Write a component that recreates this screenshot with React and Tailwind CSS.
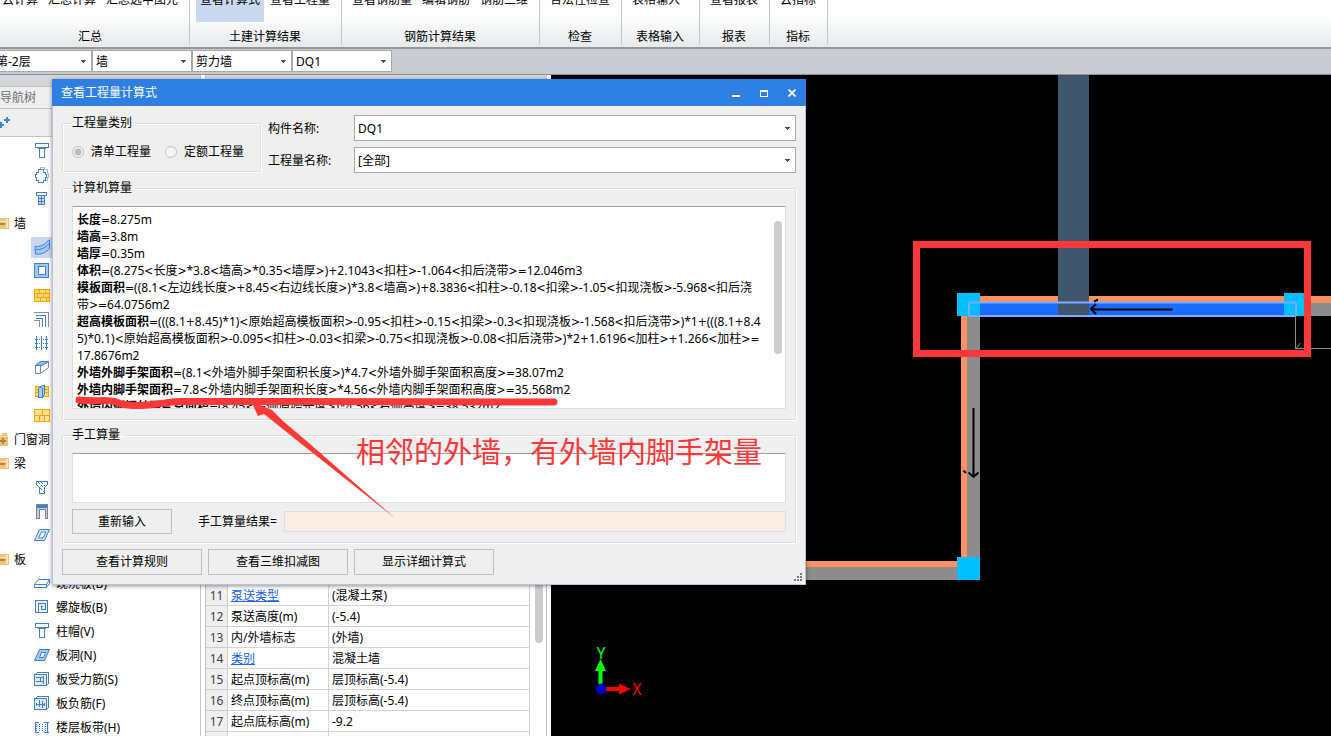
import React from "react";

const B = "#3d7fd0";

function Icon({ children }) {
  return (
    <svg width="16" height="16" viewBox="0 0 16 16" fill="none" stroke={B} shapeRendering="crispEdges" className="shrink-0" aria-hidden="true">
      {children}
    </svg>
  );
}

const ICONS = {
  cap: (
    <Icon>
      <path d="M1.5 .5h13v4h-13zM3.5 4.500l2 2M12.500 4.500l-2 2M5.500 5.500h5v9h-5z" fill="#fff" />
    </Icon>
  ),
  gear: (
    <Icon>
      <path d="M6.500 2.500v-2h4v2h3v4h1v4h-1v3h-2" stroke="#9cc3f0" />
      <path d="M4.500 2.500h5v3h2v2h1v3h-1v3h-2v2h-5v-2h-2v-3h-1v-3h1v-2h2z" fill="#fff" strokeWidth="1.500" />
    </Icon>
  ),
  pile: (
    <Icon>
      <path d="M2.500 1.500h10v3h-10z" fill="#fff" />
      <path d="M4.500 4.500h6v9h-6z" fill="#cfe0f6" />
      <path d="M4 7.500h7M4 10.500h7M7.500 5v9" />
    </Icon>
  ),
  wall: (
    <Icon>
      <path d="M1 7.500C7 8 12 5 14.500 1l1 .5v8C13 13 7 16 1.500 15z" fill="#a0c8f6" shapeRendering="auto" />
      <path d="M1.500 10.500C7 11 12 8.500 15 4.500" shapeRendering="auto" />
    </Icon>
  ),
  frame: (
    <Icon>
      <path d="M.5 .5h14v14h-14z" fill="#a0c8f6" />
      <path d="M4.500 3.500h7v8h-7z" fill="#fff" />
    </Icon>
  ),
  brick: (
    <Icon>
      <path d="M.5 2.500h15v12h-15z" fill="#ffd773" stroke="#f5a800" />
      <path d="M0 6.500h16M0 10.500h16M5.500 3v3M11.500 3v3M3.500 7v3M9.500 7v3M6.500 11v3M12.500 11v3" stroke="#f5a800" />
    </Icon>
  ),
  corner: (
    <Icon>
      <path d="M0 1.500h14.500V16" stroke="#8591a0" />
      <path d="M2 4.500h9.500V16M2 7.500h6.500V16" />
      <path d="M0 9.500h5.500V16" stroke="#8591a0" />
    </Icon>
  ),
  grid: (
    <Icon>
      <path d="M2.500 1v14M7.500 1v14M12.500 1v14" />
      <path d="M1 4.500h14M1 8.500h14M1 12.500h14" strokeDasharray="1 1" />
    </Icon>
  ),
  beamBox: (
    <Icon>
      <path d="M1.500 6.500l5-4h8v6l-8 6h-5z" fill="#fff" stroke="#7d8896" shapeRendering="auto" />
      <path d="M1.500 6.500l5-4h8l-6 4z" fill="#8fbcf2" shapeRendering="auto" />
      <path d="M6.500 7v7" stroke="#7d8896" />
    </Icon>
  ),
  door: (
    <Icon>
      <path d="M1.500 3.500h13v10h-13z" fill="#ffd773" stroke="#f5a800" />
      <path d="M1 6.500h14M1 9.500h14" stroke="#f5a800" />
      <path d="M4.500 5.500l4-3h2v9l-2 3h-4z" fill="#a9cdf5" />
      <path d="M8.500 5v9" />
    </Icon>
  ),
  block: (
    <Icon>
      <path d="M.5 2.500h15v12h-15z" fill="#ffe093" stroke="#f5a800" />
      <path d="M0 8.500h16M8.500 3v5M5.500 9v5M10.500 9v5" stroke="#f5a800" />
    </Icon>
  ),
  funnel: (
    <Icon>
      <path d="M2.500 2.500h11v3l-3 3v6h-5v-6l-3-3z" fill="#fff" />
      <path d="M4 3l6 6M7 3l4 4M6 9l4 4" strokeDasharray="1 1" />
    </Icon>
  ),
  lintel: (
    <Icon>
      <path d="M2.500 1.500h11v14h-2v-9h-6v9h-3z" fill="#c3ccd8" stroke="#7d8896" />
      <path d="M3 3.500h10" strokeWidth="3" />
    </Icon>
  ),
  slope: (
    <Icon>
      <path d="M.5 13.500l5-11h10l-5 11zM4.500 11l3-6h4.500l-3 6z" fill="#cfe2fa" fillRule="evenodd" shapeRendering="auto" />
    </Icon>
  ),
  slab: (
    <Icon>
      <path d="M.5 9.500l4-5h11l-3 5zM.5 9.500v3h12l3-4v-4M12.500 9.500v3" fill="#fff" shapeRendering="auto" />
    </Icon>
  ),
  spiral: (
    <Icon>
      <path d="M1.500 1.500h12v12h-12zM4.500 13V4.500h6.500v6H7.500V7.500h1.500" fill="#eef5fd" />
    </Icon>
  ),
  hole: (
    <Icon>
      <path d="M.5 13.500l5-11h10l-5 11z" fill="#a0c8f6" shapeRendering="auto" />
      <path d="M5.500 10.500l2-5h4l-2 5z" fill="#fff" shapeRendering="auto" />
    </Icon>
  ),
  barS: (
    <Icon>
      <path d="M1.500 3.500l2-2h11v11l-2 2" />
      <path d="M.5 3.500h12v11h-12z" fill="#e0edfb" />
      <path d="M2 6.500h8M2 10.500h8M6.500 6v5M9.500 5v8" />
    </Icon>
  ),
  barF: (
    <Icon>
      <path d="M1.500 3.500l2-2h11v11l-2 2" />
      <path d="M.5 3.500h12v11h-12z" fill="#e0edfb" />
      <path d="M5.500 5v7M8.500 6v7M2 9.500h9M2.500 8v3M10.500 8v3" />
    </Icon>
  ),
  band: (
    <Icon>
      <path d="M1.500 3.500h13v10h-13z" fill="#eaf2fc" stroke="none" />
      <path d="M1 3.500h4M1 13.500h4M10 3.500h5M10 13.500h5" />
      <path d="M2.500 5v8M5.500 5v8M8.500 5v8M11.500 5v8" strokeDasharray="1 1" />
      <path d="M1.500 3v11M13.500 3v11" />
    </Icon>
  ),
};

function Folder({ closed }) {
  return (
    <svg width="9" height="13" viewBox="0 0 9 13" className="shrink-0" aria-hidden="true">
      <path d={closed ? "M0 2h2V0h5v2h1v11H0z" : "M0 1h9v11H0z"} fill="#edc27a" />
      <path d={closed ? "M0 3h8v1H0z" : "M0 4h6v1H0zM6 2h2v9H6z"} fill="#f9e3b8" />
      <path d={closed ? "M0 7h6v2H0zM2 5h2v6H2z" : "M0 6h5v2H0z"} fill="#b98432" />
    </svg>
  );
}

const TREE = [
  { icon: "cap" },
  { icon: "gear" },
  { icon: "pile" },
  { folder: "墙" },
  { icon: "wall", active: true },
  { icon: "frame" },
  { icon: "brick" },
  { icon: "corner" },
  { icon: "grid" },
  { icon: "beamBox" },
  { icon: "door" },
  { icon: "block" },
  { folder: "门窗洞", closed: true },
  { folder: "梁" },
  { icon: "funnel" },
  { icon: "lintel" },
  { icon: "slope" },
  { folder: "板" },
  { icon: "slab", label: "现浇板(B)" },
  { icon: "spiral", label: "螺旋板(B)" },
  { icon: "cap", label: "柱帽(V)" },
  { icon: "hole", label: "板洞(N)" },
  { icon: "barS", label: "板受力筋(S)" },
  { icon: "barF", label: "板负筋(F)" },
  { icon: "band", label: "楼层板带(H)" },
];

const RIBBON = [
  { label: "汇总", items: ["云计算", "汇总计算", "汇总选中图元"], cls: "-ml-2 w-[198px]" },
  { label: "土建计算结果", items: ["查看计算式", "查看工程量"], active: 0, cls: "" },
  { label: "钢筋计算结果", items: ["查看钢筋量", "编辑钢筋", "钢筋三维"], cls: "" },
  { label: "检查", items: ["合法性检查"], cls: "" },
  { label: "表格输入", items: ["表格输入"], cls: "w-[78px]" },
  { label: "报表", items: ["查看报表"], cls: "" },
  { label: "指标", items: ["云指标"], cls: "" },
];

const PROPS = [
  ["11", "泵送类型", "(混凝土泵)", true],
  ["12", "泵送高度(m)", "(-5.4)"],
  ["13", "内/外墙标志", "(外墙)"],
  ["14", "类别", "混凝土墙", true],
  ["15", "起点顶标高(m)", "层顶标高(-5.4)"],
  ["16", "终点顶标高(m)", "层顶标高(-5.4)"],
  ["17", "起点底标高(m)", "-9.2"],
  ["", "", ""],
];

const FORMULAS = [
  ["长度", "=8.275m"],
  ["墙高", "=3.8m"],
  ["墙厚", "=0.35m"],
  ["体积", "=(8.275<长度>*3.8<墙高>*0.35<墙厚>)+2.1043<扣柱>-1.064<扣后浇带>=12.046m3"],
  ["模板面积", "=((8.1<左边线长度>+8.45<右边线长度>)*3.8<墙高>)+8.3836<扣柱>-0.18<扣梁>-1.05<扣现浇板>-5.968<扣后浇"],
  ["", "带>=64.0756m2"],
  ["超高模板面积", "=(((8.1+8.45)*1)<原始超高模板面积>-0.95<扣柱>-0.15<扣梁>-0.3<扣现浇板>-1.568<扣后浇带>)*1+(((8.1+8.4"],
  ["", "5)*0.1)<原始超高模板面积>-0.095<扣柱>-0.03<扣梁>-0.75<扣现浇板>-0.08<扣后浇带>)*2+1.6196<加柱>+1.266<加柱>="],
  ["", "17.8676m2"],
  ["外墙外脚手架面积", "=(8.1<外墙外脚手架面积长度>)*4.7<外墙外脚手架面积高度>=38.07m2"],
  ["外墙内脚手架面积", "=7.8<外墙内脚手架面积长度>*4.56<外墙内脚手架面积高度>=35.568m2"],
  ["外墙内侧钢丝网片总面积", "=(8.45<右侧原始长度>)*4.56<右侧高度>=38.532m2"],
];

function Expression({ text }) {
  return text.split(/([<>=+]+)/).map((part, i) =>
    i % 2 ? (
      <span key={i} className="font-['DejaVu_Sans_Condensed','DejaVu_Sans',sans-serif] leading-none">
        {part}
      </span>
    ) : (
      part
    )
  );
}

function Arrow() {
  return (
    <svg width="5" height="3" viewBox="0 0 5 3" className="pointer-events-none absolute right-1.5 top-1/2 -mt-px" aria-hidden="true">
      <path d="M0 0h5v1H4v1H3v1H2V2H1V1H0z" fill="#505050" />
    </svg>
  );
}

function Combo({ value, label, id, className }) {
  return (
    <div className={"relative " + className}>
      <select id={id} aria-label={label} defaultValue={value} className="block h-full w-full appearance-none rounded-none border border-[#a9a9a9] bg-white pl-[3px] pt-0.5 outline-none">
        <option>{value}</option>
      </select>
      <Arrow />
    </div>
  );
}

function Ribbon() {
  return (
    <header className="flex h-[49px] shrink-0 overflow-hidden border-b-2 border-[#94989b] bg-linear-to-b from-white from-30% to-[#e6eaeb]">
      {RIBBON.map((g) => (
        <section key={g.label} className={"flex h-11 shrink-0 flex-col border-r border-[#c3c6c8] pl-1.5 pr-[7px] " + g.cls}>
          <div className="-mt-[41px] flex gap-0.5">
            {g.items.map((t, i) => (
              <button key={t} className={"flex h-[63px] items-end px-1 pb-3.5 leading-4 " + (g.active === i ? "bg-[#c9d9f0]" : "")}>
                {t}
              </button>
            ))}
          </div>
          <div className="mt-[7px] text-center leading-4">{g.label}</div>
        </section>
      ))}
    </header>
  );
}

function NavTree() {
  return (
    <nav className="w-[201px] shrink-0 overflow-hidden border-r border-[#c3c6ca] bg-white">
      <div className="h-3 border-b border-[#c0c3c8] bg-[#d5d6dc]" />
      <div className="h-[22px] border-b border-[#c0c3c8] bg-[#eee] leading-[22px] text-[#707070]">导航树</div>
      <div className="h-7 border-b border-[#c0c3c8] bg-[#eee] pt-2">
        <svg width="11" height="12" viewBox="0 0 11 12" aria-hidden="true">
          <path d="M7 0v6M4 3h6" stroke="#3f86d8" strokeWidth="2" />
          <path d="M1 5v6M0 8h4" stroke="#3f86d8" strokeWidth="2" />
        </svg>
      </div>
      <ul className="pt-0.5">
        {TREE.map((n, i) =>
          n.folder ? (
            <li key={i} className="flex h-6 items-center gap-[5px]">
              <Folder closed={n.closed} />
              <span className="pt-0.5">{n.folder}</span>
            </li>
          ) : (
            <li key={i} className="flex h-6 items-center pl-[31px]">
              <span className={"flex h-[21px] grow items-center gap-1.5 pl-[3px] " + (n.active ? "bg-[#c6d7ef]" : "")}>
                {ICONS[n.icon]}
                <span className="pt-0.5">{n.label}</span>
              </span>
            </li>
          )
        )}
      </ul>
    </nav>
  );
}

function PropertyPanel() {
  return (
    <section className="flex w-[342px] shrink-0 flex-col overflow-hidden border-x border-[#c3c6ca] bg-white">
      <div className="h-3 shrink-0 border-b border-[#c0c3c8] bg-[#d5d6dc]" />
      <div className="flex pt-[498px]">
        <table className="w-[324px] shrink-0 table-fixed border-separate border-spacing-0">
          <tbody>
            {PROPS.map(([n, name, value, link], i) => (
              <tr key={i} className="h-[21px]">
                <td className="w-[22px] border-b border-r border-[#cdcdcd] bg-[#efefef] p-0 pt-0.5 text-center text-[#404040]">{n}</td>
                <td className={"w-[101px] whitespace-nowrap border-b border-r border-[#d4d4d4] p-0 pl-[3px] pt-0.5 " + (link ? "text-[#2060f0] underline" : "")}>{name}</td>
                <td className="whitespace-nowrap border-b border-r border-[#d4d4d4] p-0 pl-[3px] pt-0.5">{value}</td>
              </tr>
            ))}
          </tbody>
        </table>
        <div className="ml-[5px] h-[58px] w-2 rounded-b-full bg-[#cdcdcd]" />
      </div>
    </section>
  );
}

function Canvas() {
  return (
    <main className="min-w-0 grow overflow-hidden bg-black">
      <svg width="780" height="661" viewBox="551 75 780 661" aria-label="平面图" className="block">
        <g shapeRendering="crispEdges">
          <rect x="980" y="296" width="351" height="7" fill="#ff9060" />
          <rect x="1296" y="303" width="35" height="13" fill="#8c8c8c" />
          <rect x="961" y="316" width="6" height="241" fill="#ff9060" />
          <rect x="967" y="316" width="13" height="241" fill="#8c8c8c" />
          <rect x="800" y="561" width="157" height="6" fill="#ff9060" />
          <rect x="800" y="567" width="157" height="13" fill="#8c8c8c" />
          <rect x="980" y="303" width="304" height="13" fill="#186cff" />
          <rect x="957" y="293" width="23" height="23" fill="#00bfff" />
          <rect x="1284" y="293" width="23" height="23" fill="#00bfff" />
          <rect x="957" y="557" width="23" height="23" fill="#00bfff" />
          <rect x="1058" y="75" width="31" height="241" fill="#40566d" />
        </g>
        <rect x="969" y="302.500" width="327" height="13.500" rx="1" fill="none" stroke="#80a9ff" strokeWidth="2" />
        <path d="M1295.500 317v32M1296 348.500h35M1295.500 349l5-6" stroke="#8a8a8a" fill="none" />
        <path d="M1172.500 309.500h-81M1096 304l-5 5 5 5M1094 301.500l4-2" stroke="#000" strokeWidth="2" fill="none" />
        <path d="M973.500 408v68M968.500 472.500l5 4.500 5-4.500M963.500 470.500l2.500 2.500" stroke="#000" strokeWidth="2" fill="none" />
        <path d="M600.500 688V670" stroke="#0f0" strokeWidth="4" />
        <path d="M600.500 659l5.500 12h-11z" fill="#0f0" />
        <path d="M602 689h17" stroke="#f00" strokeWidth="4" />
        <path d="M631 689l-12 5.500v-11z" fill="#f00" />
        <circle cx="601" cy="689" r="5.500" fill="#0000c4" />
        <text x="601" y="659" textAnchor="middle" fontSize="16" fill="#0f0">Y</text>
        <text x="637" y="695" textAnchor="middle" fontSize="16" fill="#f00">X</text>
      </svg>
    </main>
  );
}

const GROUP = "border border-[#e0e0e0] px-[9px] shadow-[1px_1px_0_#fff,inset_1px_1px_0_#fff]";
const BTN = "border border-[#bfbfbf] bg-[#efefef]";

function Dialog() {
  return (
    <div role="dialog" aria-labelledby="dlg-title" className="absolute left-[52px] top-[79px] w-[754px] bg-[#efefef] shadow-[0_1px_4px_rgba(0,0,0,0.45)]">
      <div className="flex h-[27px] items-center justify-between bg-[#2d80e2] pl-[9px] pr-2.5 text-white">
        <h1 id="dlg-title">查看工程量计算式</h1>
        <div className="flex gap-5">
          <button aria-label="最小化">
            <svg width="8" height="8"><path d="M0 6h8v2H0z" fill="#fff" /></svg>
          </button>
          <button aria-label="最大化">
            <svg width="8" height="8" shapeRendering="crispEdges"><path d="M0 1h8v7H0zM1 3v4h6V3z" fill="#fff" fillRule="evenodd" /></svg>
          </button>
          <button aria-label="关闭">
            <svg width="8" height="8"><path d="M.5 .5l7 7M7.500 .5l-7 7" stroke="#fff" strokeWidth="1.700" /></svg>
          </button>
        </div>
      </div>
      <div className="relative border-x border-b border-[#b9c3d3] px-[9px] pb-[9px] pt-[9px]">
        <div className="flex gap-[7px]">
          <fieldset className={"h-[57px] w-[199px] shrink-0 " + GROUP}>
            <legend className="pr-1 leading-4">工程量类别</legend>
            <div className="flex items-center gap-3.5 pt-[13px]">
              <label className="flex items-center gap-[7px] leading-4">
                <input type="radio" name="kind" defaultChecked disabled className="h-3 w-3 appearance-none rounded-full border border-[#c3c3c3] bg-[#f4f4f4] bg-radial from-[#bdbdbd] from-45% to-[#f4f4f4] to-55%" />
                清单工程量
              </label>
              <label className="flex items-center gap-[7px] leading-4">
                <input type="radio" name="kind" disabled className="h-3 w-3 appearance-none rounded-full border border-[#c3c3c3] bg-[#f4f4f4]" />
                定额工程量
              </label>
            </div>
          </fieldset>
          <div className="grid grow grid-cols-[79px_1fr] items-center gap-x-[7px] gap-y-1.5">
            <label htmlFor="member" className="pt-0.5">构件名称:</label>
            <Combo id="member" value="DQ1" className="h-[26px]" />
            <label htmlFor="quantity" className="pt-0.5">工程量名称:</label>
            <Combo id="quantity" value="[全部]" className="h-[26px]" />
          </div>
        </div>
        <fieldset className={"mt-[7px] pb-2.5 " + GROUP}>
          <legend className="pr-1 leading-4">计算机算量</legend>
          <div className="mt-2.5 flex h-[203px] justify-between overflow-hidden border border-[#dcdfe6] border-t-[#a0a0a0] bg-white pl-1 pr-[3px] pt-1">
            <div className="min-w-0 leading-[17px]">
              {FORMULAS.map(([name, rest], i) => (
                <p key={i} className="h-[17px] whitespace-nowrap">
                  <b>{name}</b>
                  <Expression text={rest} />
                </p>
              ))}
            </div>
            <div className="mt-2.5 h-[133px] w-2 shrink-0 rounded-full bg-[#cdcdcd]" />
          </div>
        </fieldset>
        <fieldset className={"mt-[7px] pb-2 " + GROUP}>
          <legend className="pr-1 leading-4">手工算量</legend>
          <textarea aria-label="手工算量" className="mt-2.5 block h-[50px] w-full resize-none border border-[#dcdfe6] border-t-[#a0a0a0] bg-white" />
          <div className="mt-1.5 flex items-center">
            <button className={"h-[25px] w-[100px] " + BTN}>重新输入</button>
            <label htmlFor="result" className="ml-[26px] w-[86px]">手工算量结果=</label>
            <input id="result" className="h-[21px] min-w-0 grow border border-[#dedede] bg-[#fbefe5]" />
          </div>
        </fieldset>
        <div className="mt-1.5 flex gap-1.5">
          <button className={"h-[26px] w-[140px] " + BTN}>查看计算规则</button>
          <button className={"h-[26px] w-[140px] " + BTN}>查看三维扣减图</button>
          <button className={"h-[26px] w-[140px] " + BTN}>显示详细计算式</button>
        </div>
        <svg width="9" height="9" className="absolute bottom-0.5 right-0.5" aria-hidden="true">
          <path d="M6 0h2v2H6zM3 3h2v2H3zM6 3h2v2H6zM0 6h2v2H0zM3 6h2v2H3zM6 6h2v2H6z" fill="#777c86" />
        </svg>
      </div>
    </div>
  );
}

function Annotations() {
  return (
    <div className="pointer-events-none absolute left-0 top-0">
      <svg width="1331" height="736" viewBox="0 0 1331 736" className="block" aria-hidden="true">
        <rect x="916.500" y="244.500" width="391" height="109" fill="none" stroke="#fc3838" strokeWidth="7" />
        <path d="M79 400C95 402 108 399 116 402C126 406 135 406 148 405C160 404 168 402 180 401.500H290L554 402" fill="none" stroke="#fc3838" strokeWidth="7" strokeLinecap="round" strokeLinejoin="round" />
        <path d="M251 401L272 410L283 421L310 444L396 519L299 442L264 414L258 416z" fill="#fc3838" />
      </svg>
      <p className="absolute left-[356px] top-[434px] whitespace-nowrap text-[29px] leading-9 text-[#fc3838]">相邻的外墙，有外墙内脚手架量</p>
    </div>
  );
}

export default function App() {
  return (
    <div className="relative flex h-screen min-h-0 flex-col overflow-hidden bg-white font-['Noto_Sans','Noto_Sans_CJK_SC',sans-serif] text-[12px] leading-4 text-black">
      <Ribbon />
      <div className="flex h-[26px] shrink-0 border-b border-[#8c8f94] bg-[#c9cbd0] pb-0.5 pt-px">
        <Combo label="楼层" value="第-2层" className="-ml-2 h-full w-[100px]" />
        <Combo label="构件类型" value="墙" className="h-full w-[100px]" />
        <Combo label="子类型" value="剪力墙" className="h-full w-[100px]" />
        <Combo label="构件" value="DQ1" className="h-full w-[100px]" />
      </div>
      <div className="flex min-h-0 grow">
        <NavTree />
        <div className="w-1 shrink-0" />
        <PropertyPanel />
        <div className="w-1 shrink-0" />
        <Canvas />
      </div>
      <Dialog />
      <Annotations />
    </div>
  );
}
